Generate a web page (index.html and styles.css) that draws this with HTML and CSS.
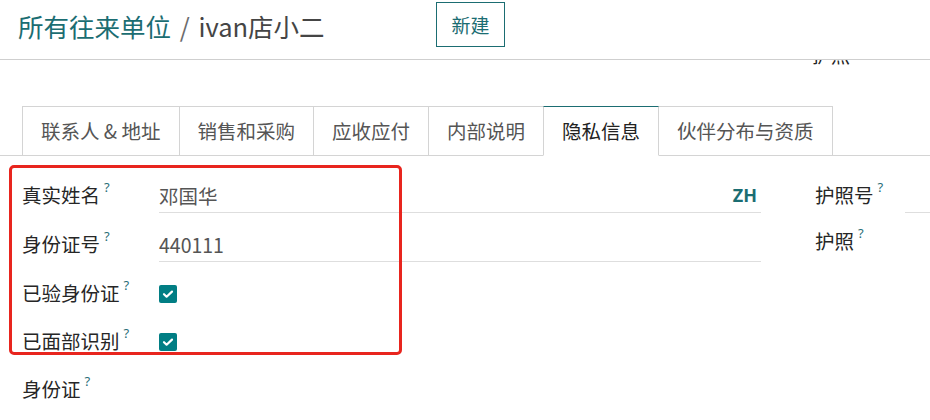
FILE: index.html
```html
<!DOCTYPE html>
<html lang="zh-CN">
<head>
<meta charset="utf-8">
<title>ivan店小二</title>
<link rel="stylesheet" href="styles.css">
</head>
<body>
<header class="topbar">
  <div class="breadcrumb">
    <span class="crumb-link">所有往来单位</span>
    <span class="crumb-sep">/</span>
    <span class="crumb-current">ivan店小二</span>
  </div>
  <button class="btn-new" type="button">新建</button>
</header>
<div class="clip-strip"><span class="clip-text">护照</span></div>

<nav class="tabs">
  <div class="tab">联系人 &amp; 地址</div>
  <div class="tab">销售和采购</div>
  <div class="tab">应收应付</div>
  <div class="tab">内部说明</div>
  <div class="tab tab-active">隐私信息</div>
  <div class="tab">伙伴分布与资质</div>
</nav>

<main class="form">
  <section class="col-left">
    <div class="row">
      <label class="label">真实姓名<sup class="help">?</sup></label>
      <div class="field field-line"><span class="value">邓国华</span><span class="lang">ZH</span></div>
    </div>
    <div class="row">
      <label class="label">身份证号<sup class="help">?</sup></label>
      <div class="field field-line"><span class="value">440111</span></div>
    </div>
    <div class="row row-check">
      <label class="label">已验身份证<sup class="help">?</sup></label>
      <div class="field"><span class="checkbox"><svg viewBox="0 0 18 18" width="18" height="18"><path d="M5 9.2l2.6 2.5L13 6.6" fill="none" stroke="#fff" stroke-width="2.2" stroke-linecap="round" stroke-linejoin="round"/></svg></span></div>
    </div>
    <div class="row row-check">
      <label class="label">已面部识别<sup class="help">?</sup></label>
      <div class="field"><span class="checkbox"><svg viewBox="0 0 18 18" width="18" height="18"><path d="M5 9.2l2.6 2.5L13 6.6" fill="none" stroke="#fff" stroke-width="2.2" stroke-linecap="round" stroke-linejoin="round"/></svg></span></div>
    </div>
    <div class="row row-check">
      <label class="label">身份证<sup class="help">?</sup></label>
      <div class="field"></div>
    </div>
  </section>
  <section class="col-right">
    <div class="row row-right">
      <label class="label">护照号<sup class="help">?</sup></label>
      <div class="field field-line"></div>
    </div>
    <div class="row row-right row-check">
      <label class="label">护照<sup class="help">?</sup></label>
      <div class="field"></div>
    </div>
  </section>
</main>

<div class="highlight"></div>
</body>
</html>
```

FILE: styles.css
```css
* { box-sizing: border-box; }

html, body {
  margin: 0;
  padding: 0;
  background: #fff;
  width: 930px;
  height: 420px;
  overflow: hidden;
}

body {
  font-family: "Noto Sans CJK SC", "Noto Sans", sans-serif;
  color: #212529;
  position: relative;
}

.topbar {
  display: flex;
  align-items: flex-start;
  height: 60px;
  border-bottom: 1px solid #cfcfcf;
}

.breadcrumb {
  width: 436px;
  padding: 8px 0 0 18px;
  font-size: 25.5px;
  line-height: 36px;
  white-space: nowrap;
}

.crumb-link { color: #1b6d72; }
.crumb-sep { color: #6c6c6c; margin: 0 3px; }
.crumb-current { color: #454545; }

.btn-new {
  margin-top: 2px;
  height: 45px;
  width: 69px;
  padding: 0;
  background: #fff;
  border: 1px solid #1b6d72;
  color: #1b6d72;
  font-family: inherit;
  font-size: 19px;
  line-height: 1;
}

.clip-strip {
  margin-left: 812px;
  width: 40px;
  height: 5px;
  overflow: hidden;
}

.clip-text {
  display: block;
  font-size: 19px;
  line-height: 20px;
  margin-top: -15px;
  color: #222;
  white-space: nowrap;
}

.tabs {
  display: flex;
  margin-top: 41px;
  padding-left: 22px;
  border-bottom: 1px solid #d4d4d4;
  height: 50px;
}

.tab {
  height: 50px;
  margin-bottom: -1px;
  margin-right: -1px;
  padding: 0 18px;
  border: 1px solid #d4d4d4;
  border-bottom-color: transparent;
  font-size: 19.5px;
  line-height: 48px;
  color: #555;
  white-space: nowrap;
}

.tab-active {
  position: relative;
  background: #fff;
  border-top-color: #1b6d72;
  border-bottom-color: #fff;
  color: #222;
}

.form {
  display: flex;
  padding-top: 22px;
}

.col-left {
  margin-left: 22px;
  width: 739px;
  display: flex;
  flex-direction: column;
  gap: 14px;
}

.col-right {
  margin-left: 54px;
  flex: 1;
  display: flex;
  flex-direction: column;
  gap: 14px;
}

.row {
  display: grid;
  grid-template-columns: 137px 1fr;
  height: 35px;
  align-items: stretch;
}

.row-check { height: 34px; }

.row-right { grid-template-columns: 90px 1fr; }

.row-right.row-check { margin-top: -3px; }

.label {
  font-size: 19.5px;
  line-height: 34px;
  color: #262626;
  white-space: nowrap;
}

.help {
  font-family: "Noto Sans", sans-serif;
  font-size: 13px;
  color: #2a6e78;
  margin-left: 4px;
  vertical-align: top;
  position: relative;
  top: -8px;
}

.field {
  display: flex;
  align-items: center;
}

.field-line {
  border-bottom: 1px solid #dedede;
  padding-right: 4px;
}

.value {
  font-size: 19.5px;
  color: #555;
  flex: 1;
}

.lang {
  font-family: "Open Sans", "Noto Sans", sans-serif;
  font-weight: 700;
  font-size: 18px;
  color: #1b6d72;
}

.checkbox {
  display: inline-flex;
  width: 18px;
  height: 18px;
  background: #017e84;
  border-radius: 2px;
  margin-top: 2px;
}

.highlight {
  position: absolute;
  left: 9px;
  top: 165px;
  width: 393px;
  height: 190px;
  border: 3px solid #e8251e;
  border-radius: 5px;
  pointer-events: none;
}
```
